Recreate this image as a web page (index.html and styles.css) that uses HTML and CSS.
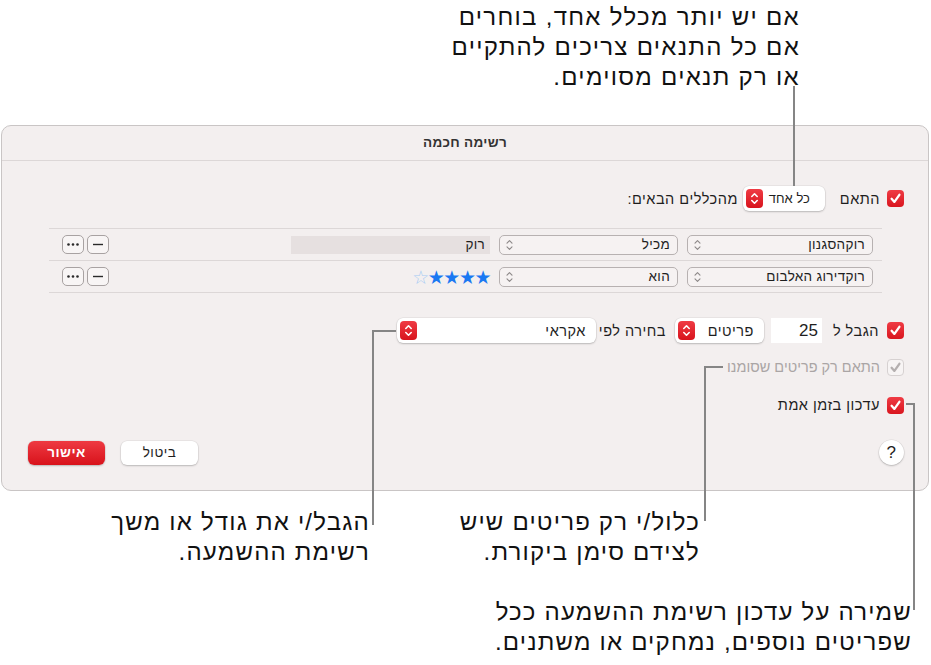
FILE: index.html
```html
<!DOCTYPE html>
<html lang="he">

<head>
    <meta charset="UTF-8">
    <title>רשימה חכמה</title>
    <link rel="stylesheet" href="styles.css">
</head>

<body>
    <div class="page">
        <p class="note note-match">אם יש יותר מכלל אחד, בוחרים<br>אם כל התנאים צריכים להתקיים<br>או רק תנאים מסוימים.</p>

        <div class="dialog" dir="rtl">
            <div class="titlebar">רשימה חכמה</div>
            <div class="dialog-body">
                <div class="row">
                    <span class="check"><svg viewBox="0 0 17 17"><path d="M4.6 8.8 L7.4 11.9 L12.4 4.8" /></svg></span>
                    <span class="label">התאם</span>
                    <span class="popup popup-any">
                        <span class="popup-text">כל אחד</span>
                        <span class="stepper"><svg viewBox="0 0 9 14"><path d="M1.8 5 L4.5 2.3 L7.2 5 M1.8 9 L4.5 11.7 L7.2 9" /></svg></span>
                    </span>
                    <span class="label">מהכללים הבאים:</span>
                </div>

                <div class="rules">
                    <div class="rule">
                        <span class="select select-field">
                            <span>רוקהסגנון</span>
                            <svg viewBox="0 0 7 12"><path d="M1 4.2 L3.5 1.7 L6 4.2 M1 7.8 L3.5 10.3 L6 7.8" /></svg>
                        </span>
                        <span class="select select-op">
                            <span>מכיל</span>
                            <svg viewBox="0 0 7 12"><path d="M1 4.2 L3.5 1.7 L6 4.2 M1 7.8 L3.5 10.3 L6 7.8" /></svg>
                        </span>
                        <span class="value">רוק</span>
                        <span class="rule-buttons">
                            <span class="small-btn"><svg viewBox="0 0 20 17"><path d="M5 8.5 H15" /></svg></span>
                            <span class="small-btn"><svg viewBox="0 0 20 17" class="dots"><circle cx="5.5" cy="8.5" r="1.3" /><circle cx="10" cy="8.5" r="1.3" /><circle cx="14.5" cy="8.5" r="1.3" /></svg></span>
                        </span>
                    </div>
                    <div class="rule">
                        <span class="select select-field">
                            <span>רוקדירוג האלבום</span>
                            <svg viewBox="0 0 7 12"><path d="M1 4.2 L3.5 1.7 L6 4.2 M1 7.8 L3.5 10.3 L6 7.8" /></svg>
                        </span>
                        <span class="select select-op">
                            <span>הוא</span>
                            <svg viewBox="0 0 7 12"><path d="M1 4.2 L3.5 1.7 L6 4.2 M1 7.8 L3.5 10.3 L6 7.8" /></svg>
                        </span>
                        <span class="stars"><span class="star">★</span><span class="star">★</span><span class="star">★</span><span class="star">★</span><span class="star star-off">☆</span></span>
                        <span class="rule-buttons">
                            <span class="small-btn"><svg viewBox="0 0 20 17"><path d="M5 8.5 H15" /></svg></span>
                            <span class="small-btn"><svg viewBox="0 0 20 17" class="dots"><circle cx="5.5" cy="8.5" r="1.3" /><circle cx="10" cy="8.5" r="1.3" /><circle cx="14.5" cy="8.5" r="1.3" /></svg></span>
                        </span>
                    </div>
                </div>

                <div class="row row-limit">
                    <span class="check"><svg viewBox="0 0 17 17"><path d="M4.6 8.8 L7.4 11.9 L12.4 4.8" /></svg></span>
                    <span class="label">הגבל ל</span>
                    <span class="number">25</span>
                    <span class="popup popup-items">
                        <span class="popup-text">פריטים</span>
                        <span class="stepper"><svg viewBox="0 0 9 14"><path d="M1.8 5 L4.5 2.3 L7.2 5 M1.8 9 L4.5 11.7 L7.2 9" /></svg></span>
                    </span>
                    <span class="label label-by">בחירה לפי</span>
                    <span class="popup popup-order">
                        <span class="popup-text">אקראי</span>
                        <span class="stepper"><svg viewBox="0 0 9 14"><path d="M1.8 5 L4.5 2.3 L7.2 5 M1.8 9 L4.5 11.7 L7.2 9" /></svg></span>
                    </span>
                </div>

                <div class="row row-small row-disabled">
                    <span class="check check-off"><svg viewBox="0 0 17 17"><path d="M4.6 8.8 L7.4 11.9 L12.4 4.8" /></svg></span>
                    <span class="label">התאם רק פריטים שסומנו</span>
                </div>

                <div class="row row-small row-live">
                    <span class="check"><svg viewBox="0 0 17 17"><path d="M4.6 8.8 L7.4 11.9 L12.4 4.8" /></svg></span>
                    <span class="label">עדכון בזמן אמת</span>
                </div>

                <div class="footer">
                    <span class="help">?</span>
                    <span class="btn">ביטול</span>
                    <span class="btn btn-ok">אישור</span>
                </div>
            </div>
        </div>

        <p class="note note-limit">הגבל/י את גודל או משך<br>רשימת ההשמעה.</p>
        <p class="note note-checked">כלול/י רק פריטים שיש<br>לצידם סימן ביקורת.</p>
        <p class="note note-live">שמירה על עדכון רשימת ההשמעה ככל<br>שפריטים נוספים, נמחקים או משתנים.</p>

        <!-- leader lines from the notes to their controls -->
        <div class="lead lead-match"></div>
        <div class="lead lead-limit"></div>
        <div class="lead lead-checked"></div>
        <div class="lead lead-live"></div>
    </div>
</body>

</html>
```

FILE: styles.css
```css
* {
    padding: 0;
    margin: 0;
    box-sizing: border-box;
}

body {
    background: white;
    font-family: "Liberation Sans", Arial, "DejaVu Sans", sans-serif;
    color: #1e1e1e;
}

.page {
    position: relative;
    width: 931px;
    height: 665px;
    padding-top: 125px;
}

/* notes round the dialog */
.note {
    position: absolute;
    direction: rtl;
    text-align: right;
    font-size: 24px;
    letter-spacing: 1.2px;
    line-height: 30px;
    color: #111;
    white-space: nowrap;
}

.note-match {
    right: 131px;
    top: 2px;
    letter-spacing: 1.3px;
}

.note-limit {
    right: 561px;
    top: 507px;
}

.note-checked {
    right: 231px;
    top: 507px;
}

.note-live {
    right: 19px;
    top: 597px;
}

.lead {
    position: absolute;
    border-color: #858585;
    border-style: solid;
    border-width: 0;
}

.lead-match {
    left: 793px;
    top: 86px;
    height: 100px;
    border-left-width: 2px;
}

.lead-limit {
    left: 372px;
    top: 330px;
    width: 24px;
    height: 195px;
    border-top-width: 2px;
    border-left-width: 2px;
}

.lead-checked {
    left: 704px;
    top: 366px;
    width: 19px;
    height: 155px;
    border-top-width: 2px;
    border-left-width: 2px;
}

.lead-live {
    left: 906px;
    top: 403px;
    width: 9px;
    height: 207px;
    border-top-width: 2px;
    border-right-width: 2px;
}

/* dialog */
.dialog {
    margin: 0 2px 0 1px;
    height: 366px;
    border: 1px solid #c9c5c5;
    border-radius: 10px;
    background: #f3efef;
    font-size: 14.5px;
    letter-spacing: 0.5px;
}

.titlebar {
    height: 35px;
    line-height: 34px;
    border-bottom: 1px solid #dcd7d7;
    text-align: center;
    font-weight: bold;
    font-size: 13.5px;
    letter-spacing: 0.3px;
    color: #333;
}

.dialog-body {
    padding: 25px 24px 0 25px;
}

.row {
    display: flex;
    align-items: center;
    height: 25px;
}

.label {
    margin-right: 7px;
    white-space: nowrap;
}

.check {
    width: 17px;
    height: 17px;
    border-radius: 4px;
    background: linear-gradient(#ef3b44, #d9161f);
    flex: none;
}

.check svg {
    display: block;
    width: 17px;
    height: 17px;
}

.check path {
    fill: none;
    stroke: white;
    stroke-width: 2.3;
    stroke-linecap: round;
    stroke-linejoin: round;
}

.check-off {
    background: #f7f4f4;
    border: 1px solid #d6d1d1;
}

.check-off svg {
    margin: -1px;
}

.check-off path {
    stroke: #b4afaf;
}

/* popups with the red stepper */
.popup {
    display: flex;
    align-items: center;
    height: 25px;
    background: white;
    border-radius: 6px;
    box-shadow: 0 0 0 0.5px rgba(0, 0, 0, 0.08), 0 1px 2px rgba(0, 0, 0, 0.2);
    padding: 0 10px 0 3px;
    margin-right: 8px;
    flex: none;
}

.popup-text {
    white-space: nowrap;
}

.stepper {
    margin-right: auto;
    width: 17px;
    height: 19px;
    border-radius: 4px;
    background: linear-gradient(#ef3b44, #d8141d);
}

.stepper svg {
    display: block;
    width: 17px;
    height: 19px;
    padding: 2px 4px;
}

.stepper path {
    fill: none;
    stroke: white;
    stroke-width: 1.6;
    stroke-linecap: round;
    stroke-linejoin: round;
}

.popup-any {
    width: 82px;
    margin-right: 15px;
    padding-right: 15px;
    font-size: 13px;
    letter-spacing: 0;
}

.popup-any + .label {
    margin-right: 5px;
}

/* rule table */
.rules {
    margin: 17px 22px 25px 22px;
    border-top: 1px solid #dcd7d7;
}

.rule {
    display: flex;
    align-items: center;
    gap: 9px;
    height: 32px;
    padding: 0 9px 0 13px;
    border-bottom: 1px solid #dcd7d7;
    font-size: 13.5px;
    letter-spacing: 0.3px;
}

.select {
    display: flex;
    align-items: center;
    height: 20px;
    border: 1px solid #b7b1b1;
    border-radius: 5px;
    background: #f6f2f2;
    padding: 0 7px 0 6px;
    white-space: nowrap;
}

.select svg {
    margin-right: auto;
    width: 7px;
    height: 12px;
}

.select path {
    fill: none;
    stroke: #8c8787;
    stroke-width: 1.1;
    stroke-linecap: round;
    stroke-linejoin: round;
}

.select-field {
    width: 186px;
}

.select-op {
    width: 179px;
}

.value {
    width: 199px;
    height: 18px;
    line-height: 18px;
    background: #e6e0e0;
    padding: 0 5px;
}

.stars {
    width: 199px;
    font-family: "DejaVu Sans", sans-serif;
    font-size: 19px;
    line-height: 20px;
    color: #1a78f2;
    letter-spacing: -1.5px;
}

.star-off {
    color: #a6cbf4;
}

.rule-buttons {
    display: flex;
    gap: 3px;
    margin-right: auto;
}

.small-btn {
    width: 22px;
    height: 19px;
    border: 1px solid #a8a2a2;
    border-radius: 5px;
    background: #f8f5f5;
}

.small-btn svg {
    display: block;
    width: 20px;
    height: 17px;
}

.small-btn path {
    stroke: #2a2a2a;
    stroke-width: 1.4;
}

.dots circle {
    fill: #2a2a2a;
}

/* limit row */
.row-limit .label {
    margin-right: 8px;
}

.number {
    width: 51px;
    height: 25px;
    margin-right: 11px;
    background: white;
    font-size: 17px;
    letter-spacing: 0;
    line-height: 25px;
    padding-right: 4px;
}

.popup-items {
    width: 89px;
    margin-right: 7px;
}

.row-limit .label-by {
    margin-right: 9px;
}

.popup-order {
    width: 199px;
    margin-right: 3px;
}

.row-small {
    height: 20px;
}

.row-disabled {
    margin-top: 14px;
    color: #aaa5a5;
    letter-spacing: 0;
}

.row-live {
    margin-top: 18px;
}

/* buttons at the bottom */
.footer {
    display: flex;
    align-items: center;
    gap: 16px;
    height: 25px;
    margin-top: 25px;
    margin-left: 1px;
}

.help {
    width: 25px;
    height: 25px;
    border-radius: 50%;
    background: white;
    box-shadow: 0 0 0 0.5px rgba(0, 0, 0, 0.08), 0 1px 2px rgba(0, 0, 0, 0.2);
    text-align: center;
    line-height: 25px;
    font-size: 17px;
    margin-left: auto;
}

.btn {
    width: 77px;
    height: 24px;
    line-height: 24px;
    text-align: center;
    border-radius: 6px;
    background: white;
    box-shadow: 0 0 0 0.5px rgba(0, 0, 0, 0.08), 0 1px 2px rgba(0, 0, 0, 0.2);
    font-size: 13.5px;
}

.btn-ok {
    background: linear-gradient(#ee3a42, #d8121b);
    color: white;
    font-weight: bold;
}
```
